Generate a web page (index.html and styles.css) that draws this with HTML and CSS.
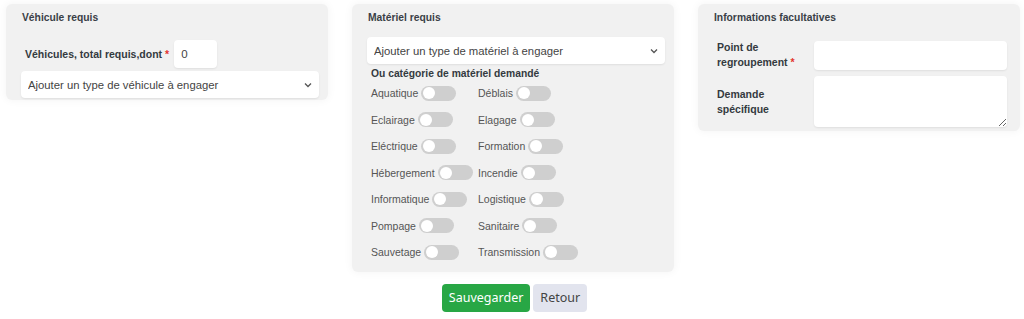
FILE: index.html
```html
<!DOCTYPE html>
<html lang="fr">
<head>
    <meta charset="UTF-8">
    <meta name="viewport" content="width=device-width, initial-scale=1.0">
    <title>Demande de moyens</title>
    <link rel="stylesheet" href="styles.css">
</head>
<body>

<form class="page">
    <div class="cards">
        <div class="card card-vehicule">
            <h3>Véhicule requis</h3>
            <div class="total-row">
                <label for="total">Véhicules, total requis,dont <span class="req">*</span></label>
                <input type="text" id="total" class="small-input" value="0">
            </div>
            <select class="select">
                <option>Ajouter un type de véhicule à engager</option>
            </select>
        </div>

        <div class="card card-materiel">
            <h3>Matériel requis</h3>
            <select class="select">
                <option>Ajouter un type de matériel à engager</option>
            </select>
            <div class="sub-title">Ou catégorie de matériel demandé</div>
            <div class="toggles">
                <label class="toggle">Aquatique <span class="switch"></span></label>
                <label class="toggle">Déblais <span class="switch"></span></label>
                <label class="toggle">Eclairage <span class="switch"></span></label>
                <label class="toggle">Elagage <span class="switch"></span></label>
                <label class="toggle">Eléctrique <span class="switch"></span></label>
                <label class="toggle">Formation <span class="switch"></span></label>
                <label class="toggle">Hébergement <span class="switch"></span></label>
                <label class="toggle">Incendie <span class="switch"></span></label>
                <label class="toggle">Informatique <span class="switch"></span></label>
                <label class="toggle">Logistique <span class="switch"></span></label>
                <label class="toggle">Pompage <span class="switch"></span></label>
                <label class="toggle">Sanitaire <span class="switch"></span></label>
                <label class="toggle">Sauvetage <span class="switch"></span></label>
                <label class="toggle">Transmission <span class="switch"></span></label>
            </div>
        </div>

        <div class="card card-infos">
            <h3>Informations facultatives</h3>
            <div class="info-grid">
                <label for="point">Point de regroupement <span class="req">*</span></label>
                <input type="text" id="point" class="field">
                <label for="demande">Demande spécifique</label>
                <textarea id="demande" class="field area"></textarea>
            </div>
        </div>
    </div>

    <div class="actions">
        <button type="submit" class="btn btn-save">Sauvegarder</button>
        <button type="button" class="btn btn-back">Retour</button>
    </div>
</form>

</body>
</html>
```

FILE: styles.css
```css
body {
    margin: 0;
    font-family: "Liberation Sans", Arial, sans-serif;
    background-color: #fff;
    color: #333;
}
.page {
    padding: 4px 4px 0 6px;
}
.cards {
    display: grid;
    grid-template-columns: repeat(3, 322px);
    column-gap: 24px;
    align-items: start;
}
.card {
    background-color: #f1f1f1;
    border-radius: 6px;
    box-shadow: 0 0 10px rgba(0, 0, 0, 0.05);
    padding: 7px 9px 2px 15px;
}
.card h3 {
    margin: 0 0 0 1px;
    font-size: 10.3px;
    line-height: 14px;
    font-weight: bold;
    color: #3a3f47;
}
.req {
    color: #e3342f;
}

/* vehicule */
.total-row {
    display: flex;
    align-items: center;
    margin-top: 15px;
    padding-left: 4px;
}
.total-row label {
    font-size: 10.5px;
    font-weight: bold;
    color: #343a40;
}
.small-input {
    width: 43px;
    height: 28px;
    box-sizing: border-box;
    margin-left: 5px;
    border: none;
    border-radius: 4px;
    padding: 0 7px;
    font-family: inherit;
    font-size: 11.5px;
    color: #444;
    box-shadow: 0 1px 2px rgba(0, 0, 0, 0.08);
}
.select {
    display: block;
    width: 100%;
    height: 27px;
    margin-top: 3px;
    border: none;
    border-radius: 4px;
    padding: 0 20px 0 7px;
    appearance: none;
    -webkit-appearance: none;
    background-color: #fff;
    background-image: url("data:image/svg+xml,%3Csvg xmlns='http://www.w3.org/2000/svg' width='8' height='6' viewBox='0 0 8 6'%3E%3Cpath d='M1 1.5l3 3 3-3' fill='none' stroke='%23555' stroke-width='1.3'/%3E%3C/svg%3E");
    background-repeat: no-repeat;
    background-position: right 7px center;
    font-family: inherit;
    font-size: 11.3px;
    color: #444;
    box-shadow: 0 1px 2px rgba(0, 0, 0, 0.08);
}
.card-materiel .select {
    margin-top: 12px;
}

/* materiel */
.sub-title {
    margin: 3px 0 0 4px;
    font-size: 10.3px;
    line-height: 13px;
    font-weight: bold;
    color: #343a40;
}
.toggles {
    display: grid;
    grid-template-columns: 107px auto;
    grid-auto-rows: 26.5px;
    padding: 0 0 4px 4px;
}
.toggle {
    display: flex;
    align-items: center;
    gap: 3px;
    font-size: 10.5px;
    color: #555;
}
.switch {
    position: relative;
    display: inline-block;
    width: 35px;
    height: 15px;
    border-radius: 8px;
    background-color: #cfcfcf;
}
.switch::after {
    content: "";
    position: absolute;
    left: 2px;
    top: 1.5px;
    width: 12px;
    height: 12px;
    border-radius: 50%;
    background-color: #fff;
}

/* infos */
.card-infos {
    padding-right: 13px;
    padding-bottom: 4px;
}
.info-grid {
    display: grid;
    grid-template-columns: 97px 1fr;
    row-gap: 6px;
    align-items: center;
    margin-top: 15px;
    padding-left: 4px;
}
.info-grid label {
    font-size: 10.5px;
    line-height: 15px;
    font-weight: bold;
    color: #343a40;
    padding-right: 8px;
}
.field {
    height: 29px;
    box-sizing: border-box;
    border: none;
    border-radius: 4px;
    background-color: #fff;
    box-shadow: 0 1px 2px rgba(0, 0, 0, 0.08);
    font-family: inherit;
}
.area {
    height: 51px;
    resize: vertical;
}

/* actions */
.actions {
    display: flex;
    justify-content: center;
    gap: 3px;
    margin-top: 12px;
    padding-left: 3px;
}
.btn {
    height: 28px;
    border: none;
    border-radius: 4px;
    padding: 0 7px;
    font-family: "Noto Sans", "Open Sans", sans-serif;
    font-size: 12.5px;
    cursor: pointer;
}
.btn-save {
    background-color: #28a745;
    color: #fff;
}
.btn-back {
    background-color: #e2e4ee;
    color: #444;
}
```
